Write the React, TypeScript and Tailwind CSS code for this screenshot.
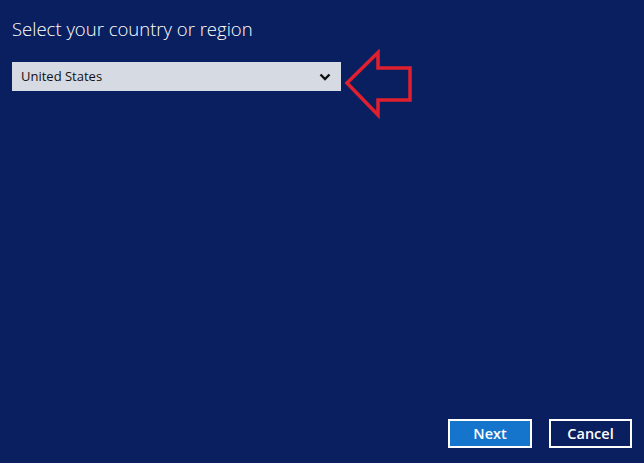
import React from "react";

function ChevronDown() {
  return (
    <svg width="12" height="8" viewBox="0 0 12 8" className="shrink-0">
      <path d="M1.5 1.5 L6 6 L10.5 1.5" fill="none" stroke="#111" strokeWidth="2.4" />
    </svg>
  );
}

function RedArrow() {
  return (
    <svg width="70" height="70" viewBox="0 0 70 70" className="shrink-0 -mt-[13px] ml-[2px]">
      <polygon
        points="4,34 35,3.5 35,19 67,19 67,51 35,51 35,66"
        fill="none"
        stroke="#e0202e"
        strokeWidth="3.5"
        strokeLinejoin="miter"
      />
    </svg>
  );
}

export default function App() {
  return (
    <main className="flex h-[463px] w-[644px] flex-col bg-[#0a1f5f] px-3 font-['Segoe_UI','Open_Sans',sans-serif]">
      {/* Heading */}
      <h1 className="mt-[16px] text-[18.5px] font-light leading-[26px] text-white">
        Select your country or region
      </h1>

      {/* Country picker */}
      <div className="mt-[20px] flex items-start">
        <button className="flex h-[29px] w-[329px] items-center justify-between bg-[#d6dae3] pl-[9px] pr-[10px] text-[13px] text-[#111]">
          <span>United States</span>
          <ChevronDown />
        </button>
        <RedArrow />
      </div>

      <div className="flex-1" />

      {/* Actions */}
      <div className="mb-[15px] flex justify-end gap-[17px]">
        <button className="h-[29px] w-[84px] border-2 border-white bg-[#1574cc] text-[14.5px] font-semibold text-white">
          Next
        </button>
        <button className="h-[29px] w-[83px] border-2 border-white bg-[#0a1f5f] text-[14.5px] font-semibold text-white">
          Cancel
        </button>
      </div>
    </main>
  );
}
